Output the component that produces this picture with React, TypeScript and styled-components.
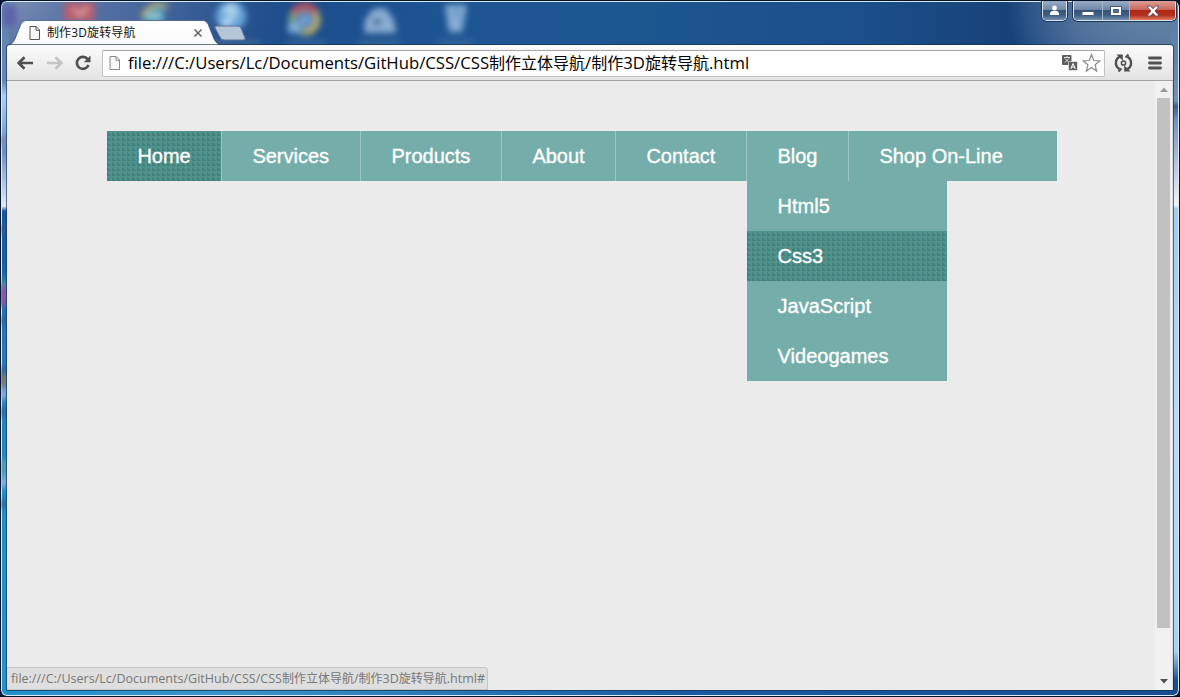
import React from "react";
import styled, { createGlobalStyle, css } from "styled-components";

const Global = createGlobalStyle`
  * { box-sizing: border-box; }
  html, body { margin: 0; padding: 0; overflow: hidden; background: #02142c; }
`;

const uiFont = `"Open Sans", "Noto Sans CJK SC", sans-serif`;

const Window = styled.div`
  position: relative;
  width: 1180px;
  height: 697px;
  display: flex;
  flex-direction: column;
  border: 1px solid #04142c;
  border-radius: 7px;
  overflow: hidden;
  padding: 0 6px 6px;
  box-shadow: inset 0 0 0 1px #dcecf8;
  background:
    linear-gradient(90deg, #2090cc 0, #3a94c8 230px, #2a78b4 440px, #1a58a0 700px, #174f91 100%) 0 688px / 100% 8px no-repeat,
    linear-gradient(180deg, #6183b1 0, #6588b5 80px, #acd0f3 95px, #80a9d8 130px, #6d8fc0 150px, #e3eaf5 205px, #1757a5 210px, #185fad 255px, #2476ba 330px, #287eb9 390px, #2389c4 450px, #1d90ca 540px, #2792d0 100%) 0 0 / 8px 100% no-repeat,
    linear-gradient(180deg, #587bab 0, #6284ab 60px, #7494bd 100px, #3d6191 105px, #7294c3 120px, #eef4ff 204px, #a1cbf5 208px, #b4dbff 430px, #a7d2f8 650px, #17508e 680px) 1170px 0 / 8px 100% no-repeat,
    radial-gradient(ellipse at 0 0, #7c8fb4 0, #5873a5 80px, rgba(50,86,144,0) 290px),
    radial-gradient(ellipse 155px 110px at 1160px 5px, #6685a6 0, #56769d 45%, rgba(56,90,138,0) 100%),
    linear-gradient(90deg, #294e8c 0, #1a4988 220px, #1d5593 450px, #1c568f 650px, #1b4e8b 860px, #174278 1010px, #28528a 1060px, #587aa5 1170px);
`;

const Backdrop = styled.svg`
  position: absolute;
  left: 0;
  top: 1px;
  width: 1176px;
  height: 689px;
`;

const TitleBar = styled.header`
  position: relative;
  display: flex;
  justify-content: space-between;
  align-items: flex-start;
  height: 44px;
  flex: none;
`;

const TabStrip = styled.div`
  position: relative;
  width: 242px;
  height: 44px;
  padding: 20px 0 0 22px;
  display: flex;
  align-items: center;
`;

const TabShape = styled.svg`
  position: absolute;
  left: 0;
  top: 18px;
`;

const TabTitle = styled.span`
  position: relative;
  margin-left: 6px;
  width: 146px;
  color: #111;
  font: 12px/20px ${uiFont};
  letter-spacing: 0.12px;
  white-space: nowrap;
`;

const TabIcon = styled.svg`
  position: relative;
  flex: none;
`;

const Controls = styled.div`
  display: flex;
  margin: 0 -3px 0 0;
`;

const CaptionGroup = styled.div<{ $gap?: number }>`
  display: flex;
  height: 20px;
  margin-right: ${(p) => p.$gap ?? 0}px;
  border: 1px solid #dce6f1;
  border-top: 0;
  border-radius: 0 0 5px 5px;
  box-shadow: 0 0 0 1px #1b3353;
  overflow: hidden;
`;

const CaptionButton = styled.div<{ $w: number; $close?: boolean }>`
  width: ${(p) => p.$w}px;
  height: 19px;
  display: flex;
  align-items: center;
  justify-content: center;
  border-left: 1px solid #a8b8cb;
  &:first-child { border-left: 0; }
  background: ${(p) =>
    p.$close
      ? "linear-gradient(180deg, #dca094 0, #c8685a 45%, #ae2717 50%, #b52f1d 75%, #dd7e60 100%)"
      : "linear-gradient(180deg, #97abc4 0, #7189a8 45%, #365477 50%, #3f6087 75%, #738eac 100%)"};
`;

const Client = styled.div`
  position: relative;
  flex: 1;
  display: flex;
  flex-direction: column;
  min-height: 0;
  border-top: 1px solid #fff;
  border-radius: 3px 3px 0 0;
  background: #ebebeb;
  box-shadow: 0 0 0 1px rgba(17, 46, 83, 0.65);
`;

const Toolbar = styled.div`
  display: flex;
  align-items: center;
  height: 35px;
  flex: none;
  padding: 0 9px 0 9px;
  border-bottom: 1px solid #a3a3a3;
  border-radius: 3px 3px 0 0;
  background: linear-gradient(180deg, #fbfbfb, #e3e3e3);
`;

const NavButtons = styled.div`
  display: flex;
  width: 86px;
  gap: 10px;
  flex: none;
`;

const AddressBar = styled.div`
  display: flex;
  align-items: center;
  width: 1003px;
  height: 27px;
  padding: 0 3px 0 6px;
  border: 1px solid #c1c1c1;
  border-top-color: #a5a5a5;
  border-radius: 2px;
  background: #fff;
`;

const Url = styled.span`
  flex: 1;
  margin-left: 7px;
  color: #000;
  font: 16px/24px ${uiFont};
  white-space: nowrap;
`;

const Latin = styled.span`
  font-size: 1.045em;
`;

const AddressActions = styled.div`
  display: flex;
  align-items: center;
  gap: 2px;
`;

const ToolbarActions = styled.div`
  display: flex;
  align-items: center;
  margin-left: 9px;
  gap: 15px;
`;

const Viewport = styled.div`
  display: flex;
  flex: 1;
  min-height: 0;
`;

const Page = styled.main`
  flex: 1;
  padding: 50px 0 0 100px;
  background: #ebebeb;
`;

const Menu = styled.ul`
  display: flex;
  width: 950px;
  height: 50px;
  margin: 0;
  padding: 0;
  list-style: none;
  background: #75adaa;
`;

const textured = css`
  background-color: #4f938d;
  background-image: linear-gradient(45deg, #447f7c 0 34%, transparent 50%);
  background-size: 5px 5px;
`;

const MenuItem = styled.li<{ $w: number; $active?: boolean }>`
  position: relative;
  width: ${(p) => p.$w}px;
  height: 50px;
  padding-left: 30.4px;
  border-left: 1px solid #9dc5c2;
  color: #fff;
  font: 20px/50px "Liberation Sans", Arial, sans-serif;
  -webkit-text-stroke: 0.35px #fff;
  white-space: nowrap;
  &:first-child { border-left: 0; }
  ${(p) => p.$active && textured}
`;

const Dropdown = styled.ul`
  position: absolute;
  left: 0;
  top: 50px;
  width: 200px;
  margin: 0;
  padding: 0;
  list-style: none;
  background: #75adaa;
`;

const DropdownItem = styled.li<{ $active?: boolean }>`
  height: 50px;
  padding-left: 30.6px;
  ${(p) => p.$active && textured}
`;

const Scrollbar = styled.aside`
  display: flex;
  flex-direction: column;
  align-items: center;
  width: 18px;
  padding-right: 1px;
  border-right: 1px solid #dcdcdc;
  background: #f1f1f1;
`;

const ScrollArrow = styled.svg`
  flex: none;
`;

const ScrollThumb = styled.div`
  width: 13px;
  height: 530px;
  margin-bottom: auto;
  background: #c1c1c1;
`;

const StatusBubble = styled.div`
  position: absolute;
  left: 0;
  bottom: 0;
  width: 481px;
  height: 23px;
  padding-left: 4px;
  border: 1px solid #c6c6c6;
  border-left: 0;
  border-radius: 0 4px 0 0;
  background: #dfdfdf;
  color: #777;
  font: 12px/21px ${uiFont};
  white-space: nowrap;
`;

const PageGlyph = ({ color }: { color: string }) => (
  <TabIcon width="12" height="14" viewBox="0 0 12 14" fill="#f8f8f8" stroke={color}>
    <path d="M1 .5h6.2L10.5 4v9.5H1z" />
    <path d="M7 .8V4.3h3.5" fill="none" />
  </TabIcon>
);

const FilePath = ({ suffix = "" }: { suffix?: string }) => (
  <>
    <Latin>file:///C:/Users/Lc/Documents/GitHub/CSS/CSS</Latin>制作立体导航<Latin>/</Latin>制作<Latin>3D</Latin>旋转导航
    <Latin>.html{suffix}</Latin>
  </>
);

const items = [
  { label: "Home", w: 114, active: true },
  { label: "Services", w: 139 },
  { label: "Products", w: 141 },
  { label: "About", w: 114 },
  { label: "Contact", w: 131 },
  { label: "Blog", w: 102, children: ["Html5", "Css3", "JavaScript", "Videogames"] },
  { label: "Shop On-Line", w: 209 },
];

export default function App() {
  return (
    <>
      <Global />
      <Window>
        <Backdrop viewBox="0 0 1176 689">
          <defs>
            <filter id="soft" x="-40%" y="-40%" width="180%" height="180%">
              <feGaussianBlur stdDeviation="3" />
            </filter>
          </defs>
          <g filter="url(#soft)">
            <path d="M2 3h13v22H2z" fill="#5c62aa" />
            <path d="M63 0h31v20H63z" fill="#b75f70" />
            <path d="M72 7l8 6 7-8" stroke="#e5a3a5" strokeWidth="3" fill="none" />
            <circle cx="153" cy="14" r="11" fill="#4b9bb9" />
            <path d="M141 15Q151-3 167 5" stroke="#b9b45f" strokeWidth="4" fill="none" />
            <path d="M146 14h14" stroke="#a2d3da" strokeWidth="4" />
            <circle cx="230" cy="14" r="15" fill="#6aa8db" />
            <path d="M224 11c4-12 14-4 7 3s-4 12-10 5" fill="none" stroke="#c3e1f4" strokeWidth="4" />
            <circle cx="304" cy="18" r="12" fill="none" stroke="#b9ad67" strokeWidth="7" />
            <path d="M292 11Q303-2 315 10" fill="none" stroke="#ad5366" strokeWidth="8" />
            <path d="M291 13Q289 26 303 31" fill="none" stroke="#669d87" strokeWidth="7" />
            <circle cx="304" cy="18" r="7" fill="#699fd6" />
            <path d="M287 21h12v10h-12z" fill="#84afd4" />
            <path d="M363 31l1-13 8-11 12-1 9 12 2 13z" fill="#8badd3" />
            <circle cx="376" cy="20" r="4" fill="#426c9d" />
            <path d="M444 3h22l-5 27h-13z" fill="#86add5" />
            <path d="M450 12l7-4 2 12" fill="none" stroke="#5188bd" strokeWidth="2" />
            <path d="M215 41h43M285 41h40M357 41h43M438 41h34" stroke="#5377a0" strokeWidth="3" />
            <path d="M0 134h6v10H0z" fill="#7586a4" />
            <path d="M0 224h6v7H0z" fill="#3b5580" />
            <path d="M0 277h6v8H0z" fill="#50a184" />
            <path d="M-3 284h10v20H-3z" fill="#9156a8" />
            <path d="M0 315h6v7H0zM0 365h6v8H0zM0 406h6v8H0zM0 498h6v8H0z" fill="#365a83" />
            <path d="M-3 373h10v12H-3z" fill="#8f7868" />
            <path d="M-3 387h10v10H-3zM-3 475h10v10H-3z" fill="#93b7e3" />
            <path d="M0 458h6v16H0z" fill="#6da6ad" />
          </g>
        </Backdrop>

        <TitleBar>
          <TabStrip>
            <TabShape width="242" height="28" viewBox="0 0 242 28">
              <defs>
                <linearGradient id="tab" x2="0" y2="1">
                  <stop stopColor="#fff" />
                  <stop offset="1" stopColor="#fafafa" />
                </linearGradient>
              </defs>
              <path d="M0 27C5 25 6 24 8 20L14 5Q16 1.500 19 1.500H196Q199 1.500 201 5L207 20Q209 25 216 27Z" fill="url(#tab)" stroke="#264876" strokeOpacity=".65" />
              <path d="M2 26h211v2H2z" fill="#fcfcfc" />
              <path d="M210 7H230Q233 7 234 9L238 19Q239 21 236 21H217Q214 21 213 18L208 9Q207 7 210 7Z" fill="#b6c4d7" stroke="#5a7499" />
            </TabShape>
            <PageGlyph color="#555" />
            <TabTitle>制作3D旋转导航</TabTitle>
            <TabIcon width="10" height="10" viewBox="0 0 10 10">
              <path d="M1.500 1.500l7 7m0-7l-7 7" stroke="#666" strokeWidth="1.600" />
            </TabIcon>
          </TabStrip>
          <Controls>
            <CaptionGroup $gap={6}>
              <CaptionButton $w={23}>
                <svg width="11" height="11" viewBox="0 0 11 11">
                  <circle cx="5.500" cy="3" r="2.400" fill="#fff" />
                  <path d="M1 10c0-3 1-4.200 4.500-4.200S10 7 10 10z" fill="#fff" />
                </svg>
              </CaptionButton>
            </CaptionGroup>
            <CaptionGroup>
              <CaptionButton $w={28}>
                <svg width="14" height="14" viewBox="0 0 14 14">
                  <rect x="1" y="7.500" width="12" height="4" rx="1" fill="#fff" stroke="#495b73" />
                </svg>
              </CaptionButton>
              <CaptionButton $w={27}>
                <svg width="14" height="12" viewBox="0 0 14 12">
                  <path d="M1.500 1.500h11v9h-11z" fill="#fff" stroke="#435873" />
                  <path d="M4.500 4.500h5v3h-5z" fill="#5c7392" stroke="#435873" />
                </svg>
              </CaptionButton>
              <CaptionButton $w={46} $close>
                <svg width="14" height="12" viewBox="0 0 14 12">
                  <path d="M1.500 1h3L7 3.700 9.500 1h3v1L9 6l3.500 4v1h-3L7 8.300 4.500 11h-3v-1L5 6 1.500 2z" fill="#fff" stroke="#635064" />
                </svg>
              </CaptionButton>
            </CaptionGroup>
          </Controls>
        </TitleBar>

        <Client>
          <Toolbar>
            <NavButtons>
              {[0, 1].map((n) => (
                <svg key={n} width="19" height="18" viewBox="0 0 19 18">
                  <path
                    d="M8.500 3.200L2.700 9l5.800 5.800M3.500 9h13.500"
                    transform={n ? "matrix(-1 0 0 1 19 0)" : undefined}
                    fill="none"
                    stroke={n ? "#c4c4c4" : "#4f4f4f"}
                    strokeWidth="2.700"
                  />
                </svg>
              ))}
              <svg width="18" height="18" viewBox="0 0 18 18">
                <path d="M13.700 5.300A6 6 0 1 0 14.500 11" fill="none" stroke="#4f4f4f" strokeWidth="2.600" />
                <path d="M16.500 1.500v6.700H9.800z" fill="#4f4f4f" />
              </svg>
            </NavButtons>
            <AddressBar>
              <PageGlyph color="#888" />
              <Url><FilePath /></Url>
              <AddressActions>
                <svg width="18" height="18" viewBox="0 0 18 18">
                  <rect x="1" y="1" width="9.500" height="10" rx="1" fill="#5e5e5e" />
                  <path d="M3 3.500h6M6 2v1.500M4 4.500l4 4M8 4.500l-4 4" stroke="#ddd" fill="none" />
                  <rect x="7.500" y="7.500" width="9" height="9" rx="1" fill="#5e5e5e" stroke="#fff" strokeWidth=".6" />
                  <path d="M9.700 15L12 9.500 14.300 15M10.500 13h3" stroke="#fff" fill="none" />
                </svg>
                <svg width="20" height="20" viewBox="0 0 20 20">
                  <path d="M10.500 1.500l2.300 6 6 .4-4.700 3.900 1.500 6.200-5.100-3.500-5.100 3.500 1.500-6.200-4.700-3.900 6-.4z" fill="#fff" stroke="#888" strokeWidth="1.200" />
                </svg>
              </AddressActions>
            </AddressBar>
            <ToolbarActions>
              <svg width="19" height="20" viewBox="0 0 19 20">
                <path d="M7 3.200C.5 5.500.5 13 5.500 16.200M12 16.800C18.500 14.500 18.500 7 13.500 3.800" fill="none" stroke="#4f4f4f" strokeWidth="2.400" />
                <path d="M2.500 1.500h6.300v6.300zM10.200 12.200v6.300h6.300z" fill="#4f4f4f" />
                <path d="M14.500 1.500l-3 3M4.500 18.500l3-3" stroke="#4f4f4f" strokeWidth="1.800" />
                <circle cx="9.500" cy="10" r="2.100" fill="none" stroke="#4f4f4f" strokeWidth="1.500" />
              </svg>
              <svg width="14" height="14" viewBox="0 0 14 14">
                <path d="M1.500 2h11M1.500 7h11M1.500 12h11" stroke="#505050" strokeWidth="2.800" strokeLinecap="round" />
              </svg>
            </ToolbarActions>
          </Toolbar>

          <Viewport>
            <Page>
              <nav>
                <Menu>
                  {items.map((item) => (
                    <MenuItem key={item.label} $w={item.w} $active={item.active}>
                      {item.label}
                      {item.children && (
                        <Dropdown>
                          {item.children.map((child) => (
                            <DropdownItem key={child} $active={child === "Css3"}>
                              {child}
                            </DropdownItem>
                          ))}
                        </Dropdown>
                      )}
                    </MenuItem>
                  ))}
                </Menu>
              </nav>
            </Page>
            <Scrollbar>
              <ScrollArrow width="17" height="17" viewBox="0 0 17 17">
                <path d="M5 11h8L9 6.500z" fill="#999" />
              </ScrollArrow>
              <ScrollThumb />
              <ScrollArrow width="17" height="17" viewBox="0 0 17 17">
                <path d="M5 6h8l-4 4.500z" fill="#505050" />
              </ScrollArrow>
            </Scrollbar>
          </Viewport>
          <StatusBubble><FilePath suffix="#" /></StatusBubble>
        </Client>
      </Window>
    </>
  );
}
